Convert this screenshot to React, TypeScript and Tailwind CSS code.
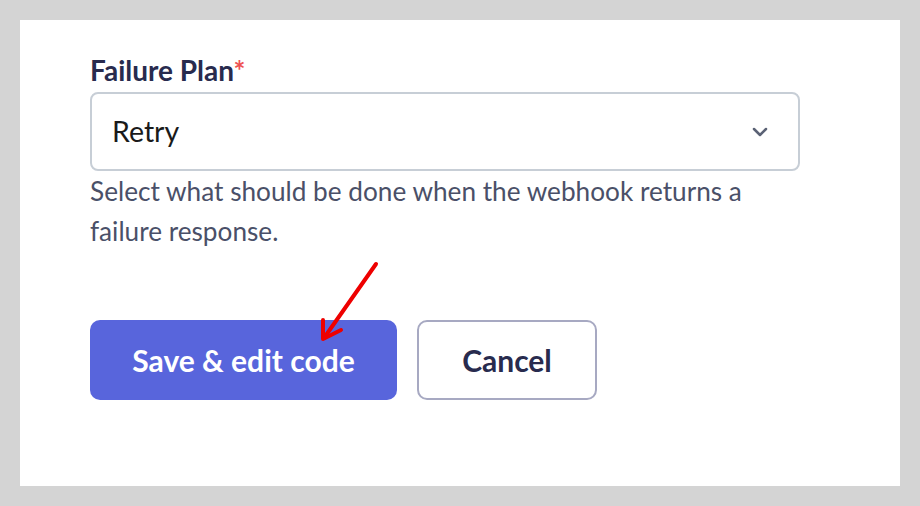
export default function App() {
  return (
    <div className="w-[920px] h-[506px] bg-[#d4d4d4] p-5 font-['Lato',sans-serif]">
      <div className="relative w-full h-full bg-white pl-[70px] pt-[34px]">
        <label className="block text-[28px] font-bold text-[#282b4e] leading-[32px]">
          Failure Plan<span className="text-[#ee5253]">*</span>
        </label>
        <div className="mt-[6px] flex items-center justify-between w-[710px] h-[79px] border-2 border-[#c7ced6] rounded-[8px] pl-[20px] pr-[30px]">
          <span className="text-[28.5px] text-[#1a1a1a]">Retry</span>
          <svg width="16" height="10" viewBox="0 0 16 10" fill="none">
            <path d="M2 2l6 6 6-6" stroke="#5b6275" strokeWidth="2.5" strokeLinecap="round" strokeLinejoin="round" />
          </svg>
        </div>
        <p className="mt-0 w-[700px] text-[26.2px] leading-[40px] text-[#4a5068]">
          Select what should be done when the webhook returns a failure response.
        </p>
        <div className="mt-[69px] flex gap-5">
          <button className="w-[307px] h-[80px] rounded-[10px] bg-[#5865dc] text-white text-[30px] font-bold">
            Save &amp; edit code
          </button>
          <button className="w-[180px] h-[80px] rounded-[10px] border-2 border-[#a7a9c2] bg-white text-[#282b4e] text-[30px] font-bold">
            Cancel
          </button>
        </div>
        <svg className="absolute left-[280px] top-[238px]" width="110" height="90" viewBox="0 0 110 90" fill="none">
          <path d="M76 6L24 80" stroke="#ee0000" strokeWidth="4" strokeLinecap="round" />
          <path d="M23 62L23 81L41 72" stroke="#ee0000" strokeWidth="4" strokeLinecap="round" strokeLinejoin="round" />
        </svg>
      </div>
    </div>
  );
}
